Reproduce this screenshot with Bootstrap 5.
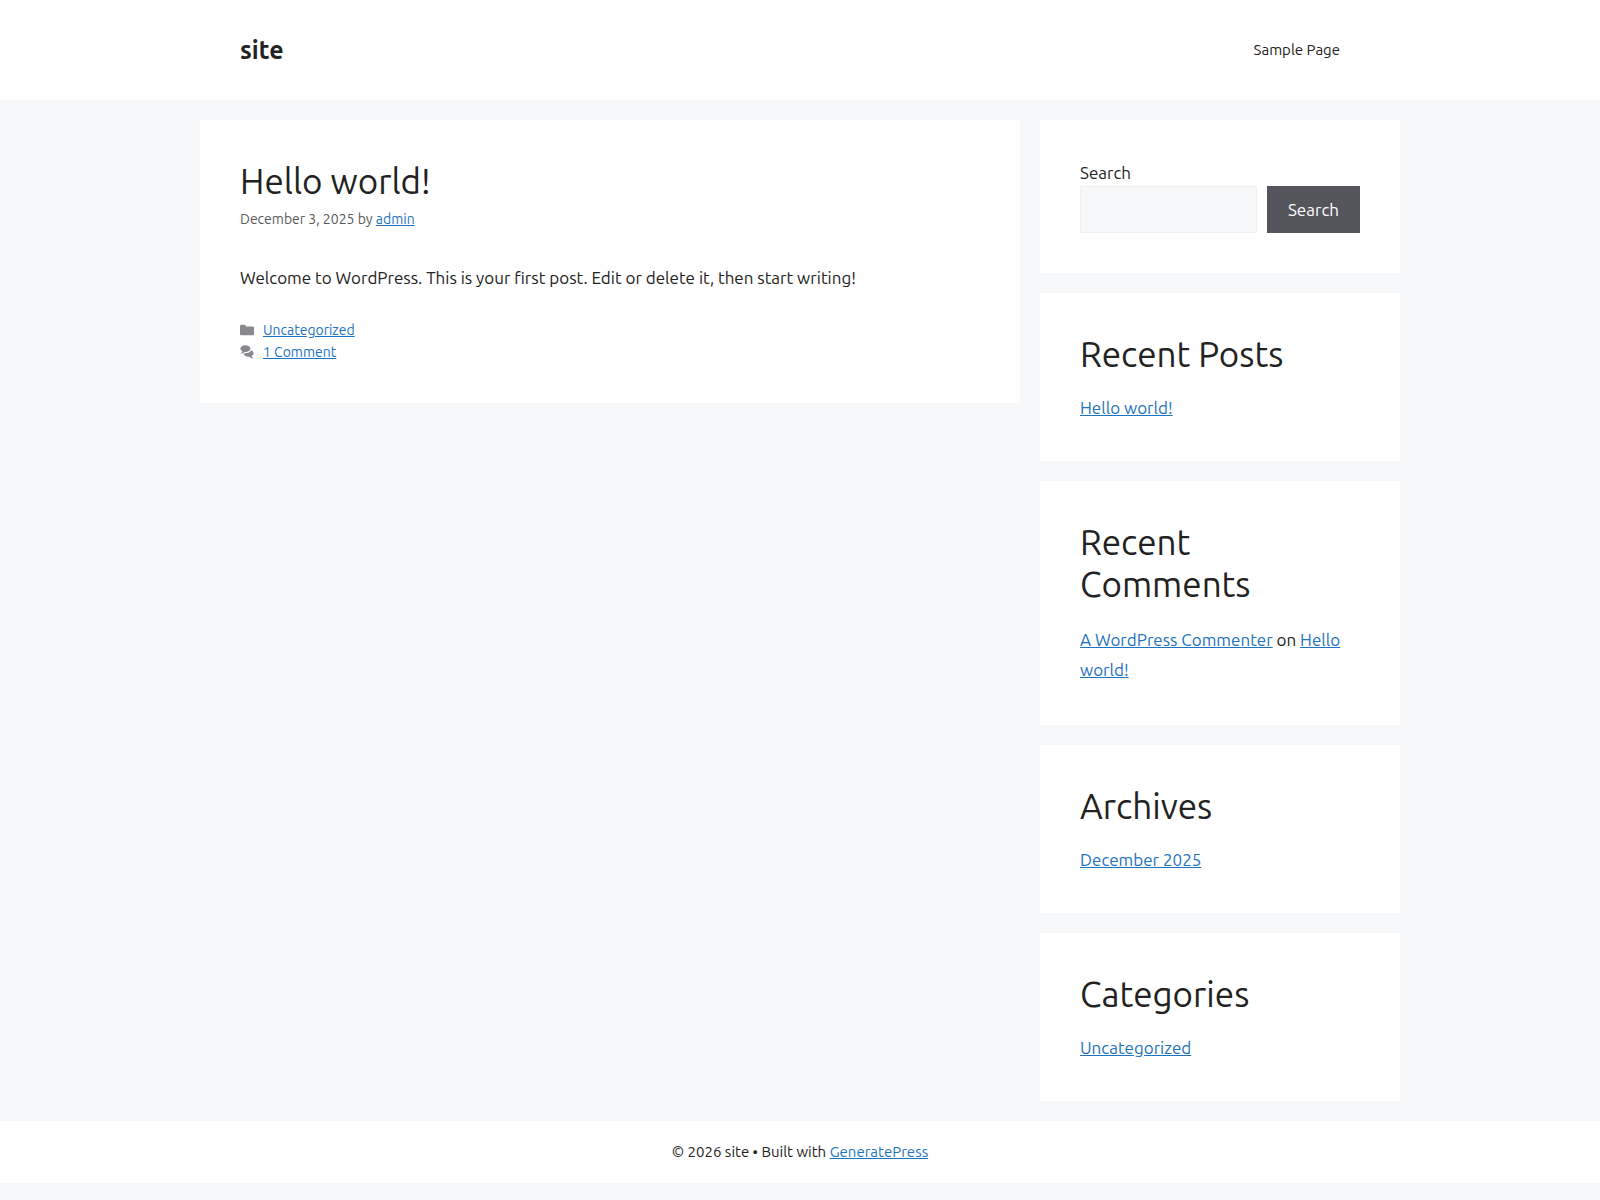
<!DOCTYPE html>
<html lang="en">
<head>
<meta charset="utf-8">
<meta name="viewport" content="width=device-width, initial-scale=1">
<title>site</title>
<link href="https://cdn.jsdelivr.net/npm/bootstrap@5.3.0/dist/css/bootstrap.min.css" rel="stylesheet">
<style>
  body { background: #f7f8f9; color: #222; font-family: Ubuntu, "Noto Sans", sans-serif; font-size: 17px; line-height: 26px; }
  a { color: #1e73be; }
  a:hover { color: #222; }
  .page-wrap { max-width: 1200px; }
  .head-inner { padding: 20px 40px; }
  .site-name { font-size: 25px; line-height: 60px; font-weight: 700; color: #222; }
  .main-menu .nav-link { font-size: 15px; line-height: 60px; padding: 0 20px; color: #222; }
  .panel { background: #fff; padding: 40px; }
  .block-gap { gap: 20px; }
  .main-area { padding: 20px 0; }
  .big-title { font-size: 35px; line-height: 42px; font-weight: 400; margin: 0; }
  .panel .big-title + ul { margin-top: 20px; }
  .meta-text { font-size: 14px; line-height: 22px; color: #595959; }
  .post-date { margin-top: 6px; }
  .post-text { margin: 35px 0 28px; }
  .meta-icon { width: 14px; height: 14px; margin-right: 9px; fill: #575760; opacity: .7; }
  .comment-list { line-height: 30px; }
  .search-row { gap: 10px; }
  .search-field { background: #f7f8f9; border: 1px solid #f0f0f0; border-radius: 0; height: 47px; min-width: 0; }
  .search-btn { background: #55555e; color: #fff; border: 0; border-radius: 0; padding: 10px 21px; font-size: 17px; }
  .search-btn:hover { background: #3f4047; color: #fff; }
  .foot-bar { font-size: 15px; line-height: 22px; padding: 20px 40px; }
  @media (min-width: 768px) { .side-col { width: 30%; } }
</style>
<script src="https://cdn.jsdelivr.net/npm/bootstrap@5.3.0/dist/js/bootstrap.bundle.min.js"></script>
</head>
<body>
<header class="bg-white">
  <div class="page-wrap head-inner mx-auto d-flex align-items-center justify-content-between">
    <a class="site-name text-decoration-none" href="#">site</a>
    <nav class="main-menu" aria-label="Primary">
      <ul class="nav">
        <li class="nav-item"><a class="nav-link" href="#">Sample Page</a></li>
      </ul>
    </nav>
  </div>
</header>

<div class="page-wrap main-area block-gap mx-auto d-flex flex-column flex-md-row align-items-stretch align-items-md-start">
  <main class="flex-grow-1">
    <article class="panel">
      <h1 class="big-title">Hello world!</h1>
      <div class="meta-text post-date">December 3, 2025 by <a href="#">admin</a></div>
      <p class="post-text">Welcome to WordPress. This is your first post. Edit or delete it, then start writing!</p>
      <footer class="meta-text">
        <div class="d-flex align-items-center">
          <svg class="meta-icon" viewBox="0 0 512 512" aria-hidden="true"><path d="M0 112c0-26.51 21.49-48 48-48h110.014a48 48 0 0143.592 27.907l12.349 26.791A16 16 0 00228.486 128H464c26.51 0 48 21.49 48 48v224c0 26.51-21.49 48-48 48H48c-26.51 0-48-21.49-48-48V112z"/></svg>
          <a href="#">Uncategorized</a>
        </div>
        <div class="d-flex align-items-center">
          <svg class="meta-icon" viewBox="0 0 512 512" aria-hidden="true"><path d="M132.838 329.973a435.298 435.298 0 0016.769-9.004c13.363-7.574 26.587-16.142 37.419-25.507 7.544.597 15.27.925 23.098.925 54.905 0 105.634-15.311 143.285-41.28 23.728-16.365 43.115-37.692 54.155-62.645 54.699 22.205 91.498 63.272 91.498 110.286 0 42.186-29.558 79.498-75.09 102.828 23.46 49.216 75.09 101.709 75.09 101.709s-115.837-38.35-154.424-78.46c-9.956 1.12-20.297 1.758-30.793 1.758-88.727 0-162.927-43.071-181.007-100.61z"/><path d="M383.371 132.502c0 70.603-82.961 127.787-185.216 127.787-10.496 0-20.837-.639-30.793-1.757-38.587 40.093-154.424 78.42-154.424 78.42s51.63-52.472 75.09-101.67c-45.532-23.321-75.09-60.619-75.09-102.79C12.938 61.9 95.9 4.716 198.155 4.716 300.41 4.715 383.37 61.9 383.37 132.502z"/></svg>
          <a href="#">1 Comment</a>
        </div>
      </footer>
    </article>
  </main>

  <aside class="side-col flex-shrink-0 d-flex flex-column block-gap">
    <section class="panel">
      <form role="search">
        <label class="d-block" for="site-search">Search</label>
        <div class="search-row d-flex">
          <input class="search-field form-control flex-grow-1" type="search" id="site-search">
          <button class="search-btn btn" type="button">Search</button>
        </div>
      </form>
    </section>
    <section class="panel">
      <h2 class="big-title">Recent Posts</h2>
      <ul class="list-unstyled mb-0"><li><a href="#">Hello world!</a></li></ul>
    </section>
    <section class="panel">
      <h2 class="big-title">Recent Comments</h2>
      <ul class="comment-list list-unstyled mb-0"><li><a href="#">A WordPress Commenter</a> on <a href="#">Hello world!</a></li></ul>
    </section>
    <section class="panel">
      <h2 class="big-title">Archives</h2>
      <ul class="list-unstyled mb-0"><li><a href="#">December 2025</a></li></ul>
    </section>
    <section class="panel">
      <h2 class="big-title">Categories</h2>
      <ul class="list-unstyled mb-0"><li><a href="#">Uncategorized</a></li></ul>
    </section>
  </aside>
</div>

<footer class="foot-bar bg-white text-center">© 2026 site • Built with <a href="#">GeneratePress</a></footer>
</body>
</html>
